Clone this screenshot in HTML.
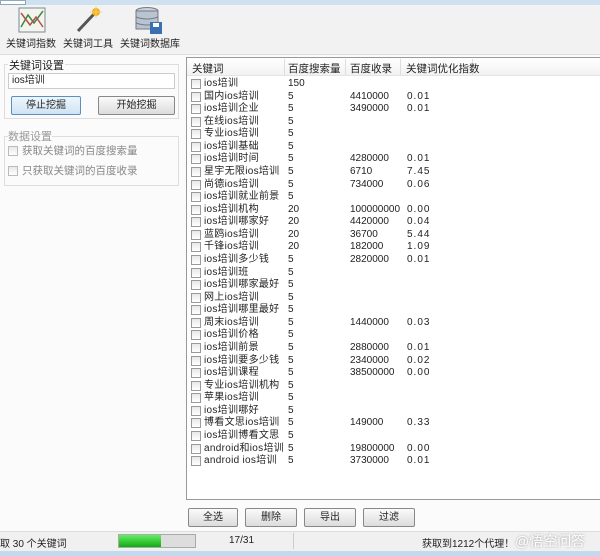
<!DOCTYPE html>
<html><head><meta charset="utf-8"><style>
*{margin:0;padding:0;box-sizing:border-box}
body{width:600px;height:556px;overflow:hidden;background:#fbfbfb;font-family:"Liberation Sans","Noto Sans CJK SC",sans-serif;font-size:10px;color:#222;position:relative}
.a{position:absolute;white-space:nowrap}
.cb{position:absolute;width:10px;height:10px;border:1px solid #999;background:linear-gradient(#e8e8e8,#fff)}
.btn{position:absolute;height:19px;border:1px solid #888;border-radius:2px;background:linear-gradient(#fafafa,#dcdcdc);text-align:center;line-height:17px;font-size:10px}
.r{position:absolute;height:12px;line-height:12px;font-size:10px}
</style></head><body>
<div class="a" style="left:0;top:0;width:600px;height:5px;background:#cfe0f1"></div>
<div class="a" style="left:0;top:0;width:26px;height:5px;background:#fff;border:1px solid #8ab"></div>
<div class="a" style="left:0;top:5px;width:600px;height:50px;background:#f2f2f2;border-bottom:1px solid #ddd"></div>
<svg class="a" style="left:18px;top:7px" width="28" height="26"><rect x="1" y="1" width="26" height="24" fill="#f4f4ee" stroke="#7a8a96"/><path d="M3 20 L10 8 L16 16 L25 4" stroke="#3a8a3a" fill="none" stroke-width="1.5"/><path d="M3 6 L12 18 L18 10 L25 20" stroke="#b05050" fill="none" stroke-width="1.5"/></svg>
<svg class="a" style="left:74px;top:6px" width="28" height="28"><path d="M4 25 L20 8" stroke="#555" stroke-width="3"/><circle cx="22" cy="6" r="4" fill="#f0b020"/><path d="M22 0V12M16 6H28" stroke="#f8d060" stroke-width="1"/></svg>
<svg class="a" style="left:134px;top:6px" width="30" height="30"><ellipse cx="13" cy="5" rx="11" ry="3.5" fill="#c8d2dc" stroke="#778"/><rect x="2" y="5" width="22" height="18" fill="#b8c4d0" stroke="#778"/><path d="M2 11Q13 15 24 11M2 17Q13 21 24 17" stroke="#778" fill="none"/><rect x="16" y="16" width="12" height="12" fill="#3a70b0"/><rect x="19" y="17" width="6" height="4" fill="#fff"/></svg>
<div class="a" style="left:6px;top:35px;font-size:10px">关键词指数</div>
<div class="a" style="left:63px;top:35px;font-size:10px">关键词工具</div>
<div class="a" style="left:120px;top:35px;font-size:10px">关键词数据库</div>
<div class="a" style="left:4px;top:64px;width:175px;height:55px;border:1px solid #ddd;background:#fbfbfb"></div>
<div class="a" style="left:8px;top:57px;font-size:11px;background:#fbfbfb;padding:0 1px">关键词设置</div>
<div class="a" style="left:8px;top:73px;width:167px;height:16px;border:1px solid #ccc;background:#fff;font-size:10px;line-height:14px;padding-left:3px">ios培训</div>
<div class="btn" style="left:11px;top:96px;width:70px;border-color:#5b8fc0;background:linear-gradient(#eef6fc,#cfe3f4)">停止挖掘</div>
<div class="btn" style="left:98px;top:96px;width:77px">开始挖掘</div>
<div class="a" style="left:4px;top:136px;width:175px;height:50px;border:1px solid #ddd"></div>
<div class="a" style="left:8px;top:128px;font-size:11px;color:#999;background:#fbfbfb">数据设置</div>
<div class="cb" style="left:8px;top:146px;border-color:#bbb"></div><div class="a" style="left:22px;top:143px;color:#888;font-size:10.5px">获取关键词的百度搜索量</div>
<div class="cb" style="left:8px;top:166px;border-color:#bbb"></div><div class="a" style="left:22px;top:163px;color:#888;font-size:10.5px">只获取关键词的百度收录</div>
<div class="a" style="left:186px;top:57px;width:420px;height:443px;border:1px solid #999;background:#fff"></div>
<div class="a" style="left:187px;top:58px;width:413px;height:18px;background:linear-gradient(#fff,#f2f2f2);border-bottom:1px solid #e4e4e4"></div>
<div class="a" style="left:284px;top:59px;width:1px;height:16px;background:#ddd"></div>
<div class="a" style="left:345px;top:59px;width:1px;height:16px;background:#ddd"></div>
<div class="a" style="left:400px;top:59px;width:1px;height:16px;background:#ddd"></div>
<div class="a" style="left:472px;top:59px;width:1px;height:16px;background:#ddd"></div>
<div class="a" style="left:192px;top:61px;font-size:10.5px">关键词</div>
<div class="a" style="left:288px;top:61px;font-size:10.5px">百度搜索量</div>
<div class="a" style="left:350px;top:61px;font-size:10.5px">百度收录</div>
<div class="a" style="left:406px;top:61px;font-size:10.5px">关键词优化指数</div>
<div id="rows"></div>
<script>
var d=[["ios培训","150","",""],["国内ios培训","5","4410000","0.01"],["ios培训企业","5","3490000","0.01"],["在线ios培训","5","",""],["专业ios培训","5","",""],["ios培训基础","5","",""],["ios培训时间","5","4280000","0.01"],["星宇无限ios培训","5","6710","7.45"],["尚德ios培训","5","734000","0.06"],["ios培训就业前景","5","",""],["ios培训机构","20","100000000","0.00"],["ios培训哪家好","20","4420000","0.04"],["蓝鸥ios培训","20","36700","5.44"],["千锋ios培训","20","182000","1.09"],["ios培训多少钱","5","2820000","0.01"],["ios培训班","5","",""],["ios培训哪家最好","5","",""],["网上ios培训","5","",""],["ios培训哪里最好","5","",""],["周末ios培训","5","1440000","0.03"],["ios培训价格","5","",""],["ios培训前景","5","2880000","0.01"],["ios培训要多少钱","5","2340000","0.02"],["ios培训课程","5","38500000","0.00"],["专业ios培训机构","5","",""],["苹果ios培训","5","",""],["ios培训哪好","5","",""],["博看文思ios培训","5","149000","0.33"],["ios培训博看文思","5","",""],["android和ios培训","5","19800000","0.00"],["android ios培训","5","3730000","0.01"]];
var h="";d.forEach(function(r,i){var t=+(78+i*12.57).toFixed(1);
h+='<div class="cb" style="left:191px;top:'+(t+1)+'px"></div><div class="r" style="left:204px;top:'+t+'px;letter-spacing:0.3px">'+r[0]+'</div><div class="r" style="left:288px;top:'+t+'px">'+r[1]+'</div><div class="r" style="left:350px;top:'+t+'px">'+r[2]+'</div><div class="r" style="left:407px;top:'+t+'px;letter-spacing:1px">'+r[3]+'</div>';});
document.getElementById("rows").innerHTML=h;
</script>
<div class="btn" style="left:188px;top:508px;width:50px">全选</div>
<div class="btn" style="left:245px;top:508px;width:52px">删除</div>
<div class="btn" style="left:304px;top:508px;width:52px">导出</div>
<div class="btn" style="left:363px;top:508px;width:52px">过滤</div>
<div class="a" style="left:0;top:531px;width:600px;height:20px;background:#f0f0f0;border-top:1px solid #ddd"></div>
<div class="a" style="left:0;top:535px">取 30 个关键词</div>
<div class="a" style="left:118px;top:534px;width:78px;height:14px;border:1px solid #aaa;background:#ddd"><div style="width:42px;height:12px;background:linear-gradient(#6e6,#1a1)"></div></div>
<div class="a" style="left:229px;top:535px">17/31</div>
<div class="a" style="left:293px;top:533px;width:1px;height:16px;background:#ccc"></div>
<div class="a" style="left:422px;top:535px">获取到1212个代理！</div>
<div class="a" style="left:515px;top:531px;font-size:14px;color:#fff;text-shadow:0 0 2px #999">@悟空问答</div>
<div class="a" style="left:0;top:551px;width:600px;height:5px;background:#c5d9ee"></div>
</body></html>
